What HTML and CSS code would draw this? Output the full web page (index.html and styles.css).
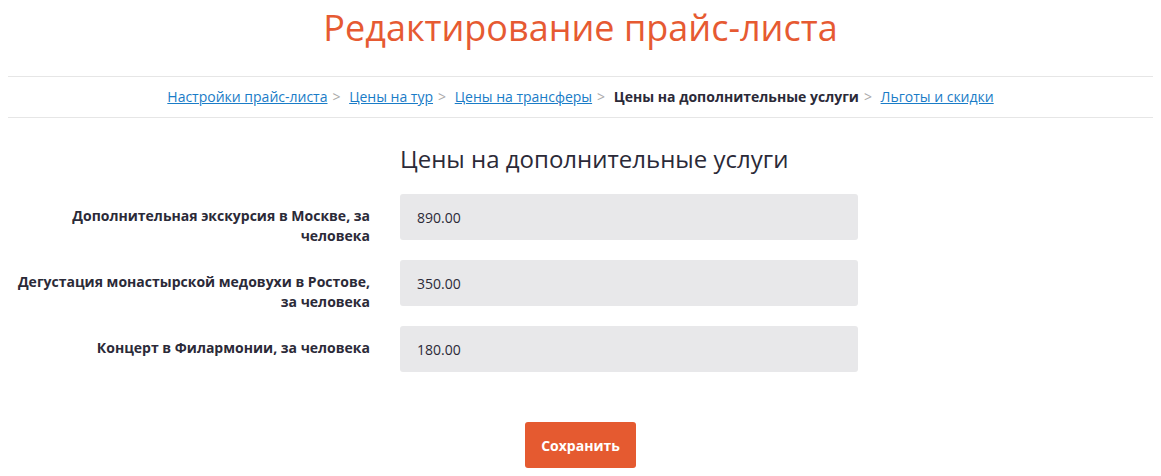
FILE: index.html
```html
<!DOCTYPE html>
<html lang="ru">
<head>
<meta charset="utf-8">
<title>Редактирование прайс-листа</title>
<link rel="stylesheet" href="styles.css">
</head>
<body>
<h1 class="title">Редактирование прайс-листа</h1>
<nav class="crumbs">
  <a href="#">Настройки прайс-листа</a><span class="sep">&gt;</span>
  <a href="#">Цены на тур</a><span class="sep">&gt;</span>
  <a href="#">Цены на трансферы</a><span class="sep">&gt;</span>
  <b class="current">Цены на дополнительные услуги</b><span class="sep">&gt;</span>
  <a href="#">Льготы и скидки</a>
</nav>
<form class="form">
  <div class="head">
    <h2 class="subtitle">Цены на дополнительные услуги</h2>
  </div>
  <div class="row">
    <label class="label-col">Дополнительная экскурсия в Москве, за человека</label>
    <input class="field" type="text" value="890.00">
  </div>
  <div class="row">
    <label class="label-col">Дегустация монастырской медовухи в Ростове, за человека</label>
    <input class="field" type="text" value="350.00">
  </div>
  <div class="row">
    <label class="label-col">Концерт в Филармонии, за человека</label>
    <input class="field" type="text" value="180.00">
  </div>
  <div class="actions">
    <button class="btn" type="button">Сохранить</button>
  </div>
</form>
</body>
</html>
```
FILE: styles.css
```css
body {
  margin: 8px;
  font-family: "Open Sans", "Noto Sans", sans-serif;
  color: #2b2a38;
  background: #fff;
}
.title {
  margin: 0;
  padding-bottom: 29px;
  font-size: 36px;
  font-weight: 400;
  line-height: 39px;
  text-align: center;
  color: #e65a32;
  border-bottom: 1px solid #e6e6e6;
}
.crumbs {
  height: 40px;
  line-height: 40px;
  font-size: 14px;
  text-align: center;
  border-bottom: 1px solid #e6e6e6;
}
.crumbs a {
  color: #1a7cc7;
  text-decoration: underline;
}
.crumbs .sep {
  color: #aaa;
  margin: 0 5px 0 5px;
}
.crumbs .current {
  font-weight: 700;
  color: #2b2a38;
}
.form {
  padding-top: 23px;
}
.head {
  padding-left: 392px;
  margin-bottom: 17px;
}
.subtitle {
  margin: 0;
  font-size: 24px;
  font-weight: 400;
  line-height: 36px;
  color: #2b2a38;
}
.row {
  display: grid;
  grid-template-columns: 362px 458px;
  grid-template-rows: 46px;
  column-gap: 30px;
  margin-bottom: 20px;
}
.label-col {
  text-align: right;
  font-size: 14px;
  font-weight: 700;
  line-height: 20px;
  padding-top: 12px;
}
.field {
  box-sizing: border-box;
  height: 46px;
  border: none;
  border-radius: 3px;
  background: #e8e8ea;
  padding: 0 17px;
  font-family: inherit;
  font-size: 14px;
  color: #2b2a38;
}
.actions {
  display: flex;
  justify-content: center;
  padding-top: 30px;
}
.btn {
  height: 46px;
  width: 111px;
  border: none;
  border-radius: 3px;
  background: #e55a30;
  color: #fff;
  font-family: inherit;
  font-size: 14px;
  font-weight: 700;
}
```
